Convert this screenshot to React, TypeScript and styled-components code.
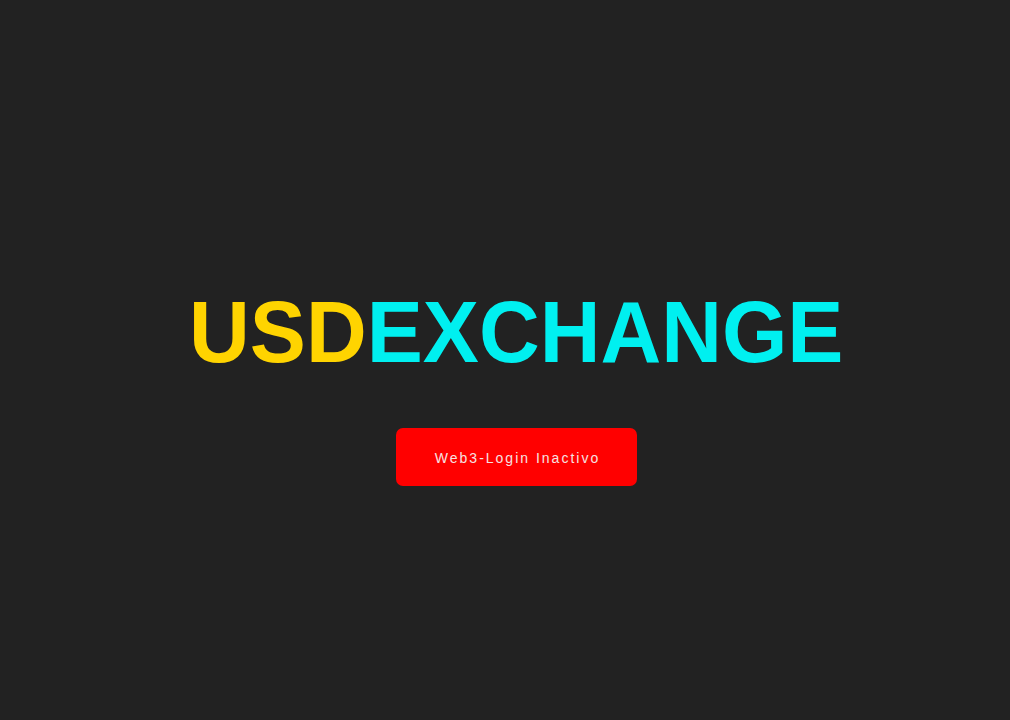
import React from "react";
import styled, { createGlobalStyle } from "styled-components";

const Global = createGlobalStyle`
  html, body { margin: 0; padding: 0; background: #222222; }
  body { font-family: "Liberation Sans", Arial, sans-serif; }
`;

const Page = styled.main`
  width: 1010px;
  height: 720px;
  display: flex;
  flex-direction: column;
  align-items: center;
  justify-content: flex-start;
  padding: 280px 0 0 23px;
  box-sizing: border-box;
  background: #222222;
`;

const Title = styled.h1`
  margin: 0;
  font-family: "Liberation Sans", Arial, sans-serif;
  font-weight: 700;
  font-size: 88px;
  line-height: 104px;
  letter-spacing: 0;
  white-space: nowrap;
  transform: scaleX(0.956);
`;

const Part = styled.span<{ $color: string }>`
  color: ${(p) => p.$color};
`;

const Button = styled.button`
  margin-top: 44px;
  width: 241px;
  height: 58px;
  padding: 1px 0 0 2px;
  border: none;
  border-radius: 7px;
  background: #ff0000;
  color: #f6e2e2;
  font-family: "Liberation Sans", Arial, sans-serif;
  font-size: 14px;
  letter-spacing: 2px;
  cursor: pointer;
`;

export default function App() {
  return (
    <>
      <Global />
      <Page>
        <Title>
          <Part $color="#ffd400">USD</Part>
          <Part $color="#00f0f0">EXCHANGE</Part>
        </Title>
        <Button>Web3-Login Inactivo</Button>
      </Page>
    </>
  );
}
